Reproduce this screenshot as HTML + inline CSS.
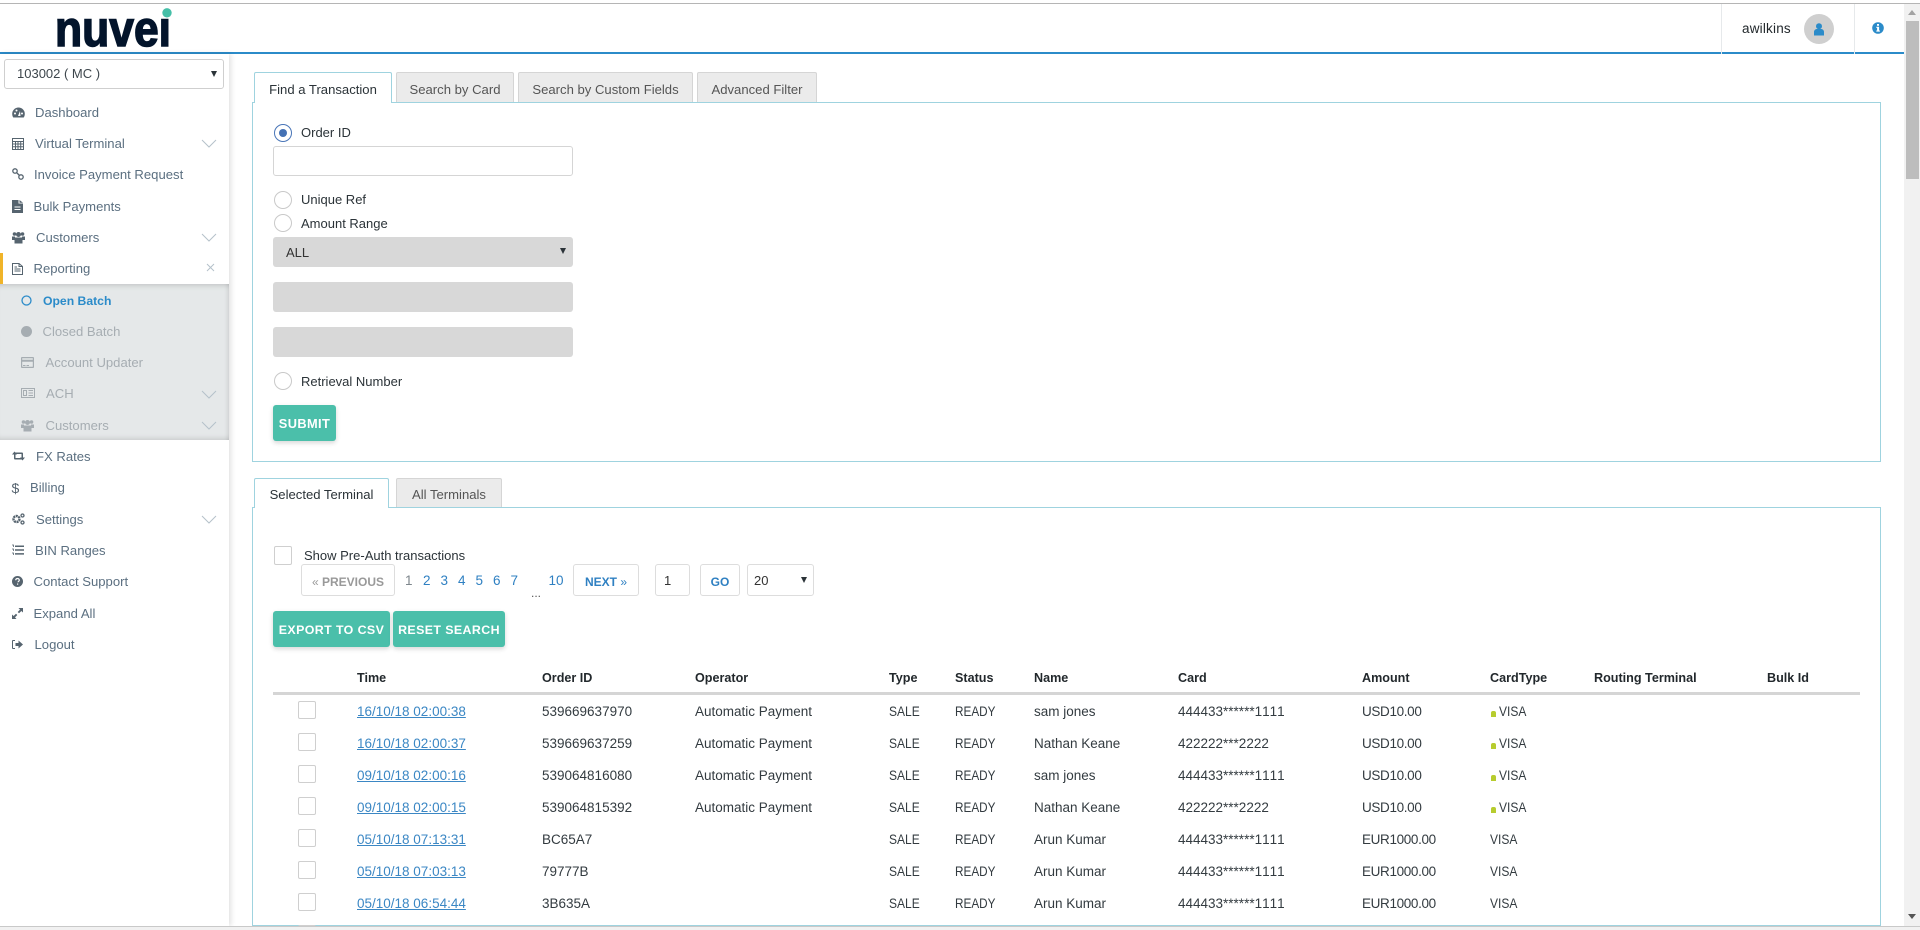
<!DOCTYPE html>
<html><head><meta charset="utf-8"><title>Nuvei</title>
<style>
*{box-sizing:border-box}
html,body{margin:0;padding:0;width:1920px;height:930px;overflow:hidden;background:#fff;font-family:"Liberation Sans",sans-serif;font-size:13.5px;color:#2b3338}
.a{position:absolute}
.t{position:absolute;line-height:20px;height:20px;white-space:nowrap}
.side{position:absolute;left:0;top:54px;width:229px;height:872px;background:#fff;box-shadow:2px 0 5px rgba(0,0,0,.12)}
.n{position:absolute;line-height:20px;height:20px;white-space:nowrap;font-size:13.1px;color:#5b6f80}
.s{color:#a6adb2}
.ic{position:absolute;fill:#56646f}
.ig{position:absolute;fill:#a6adb2}
.ch{position:absolute;left:201px;width:16px;height:9px;fill:none;stroke:#b5c1ca;stroke-width:1}
.tab{position:absolute;top:72px;height:31px;background:#ebebeb;border:1px solid #d5d5d5;border-bottom:0;text-align:center;line-height:33px;color:#555;font-size:13.1px;border-radius:2px 2px 0 0}
.tab.on{background:#fff;border-color:#9fd3df;color:#2b3338;height:31px;z-index:2}
.panel{position:absolute;left:252px;width:1629px;border:1px solid #9fd3df;background:#fff}
.rad{position:absolute;left:274px;width:18px;height:18px;border:1px solid #c9c9c9;border-radius:50%;background:#fff}
.box{position:absolute;left:273px;width:300px;height:30px;border-radius:3px;background:#d8d8d8}
.btn{position:absolute;height:36px;background:#4bbfaa;border-radius:3px;color:#fff;font-weight:700;font-size:12.4px;line-height:38px;letter-spacing:.4px;box-shadow:0 2px 5px rgba(0,0,0,.16);white-space:nowrap}
.pg{position:absolute;top:564px;height:32px;border:1px solid #ddd;border-radius:3px;background:#fff;text-align:center;line-height:31px;font-size:13px;white-space:nowrap}
.pb{line-height:34px}
.num{position:absolute;top:571px;line-height:20px;color:#2f80c2;font-size:13.5px}
table{position:absolute;left:273px;top:664px;border-collapse:separate;border-spacing:0;table-layout:fixed;width:1587px;font-size:13.5px}
th{height:31px;padding:0;text-align:left;font-weight:700;font-size:12.6px;color:#22282c;border-bottom:3px solid #d5d5d5}
td{height:32px;padding:1px 0 0;white-space:nowrap;color:#333b40;font-kerning:none}
td a{color:#3b87c4;text-decoration:underline}
.cb{display:block;position:relative;top:-2px;width:18px;height:18px;margin:0 0 0 25px;border:1px solid #cfcfcf;border-radius:2px;background:#fff}
.lk{display:inline-block;width:5px;height:6px;margin:0 3px 0 1px;background:#b7cc2e;border-radius:2px 2px 0 0;vertical-align:-1px}
.x{display:inline-block;transform:scaleX(.89);transform-origin:0 50%}
.y{display:inline-block;transform:scaleX(.87);transform-origin:0 50%}
.c3{letter-spacing:-.35px}
</style></head><body>

<!-- top bar -->
<div class="a" style="left:0;top:3px;width:1920px;height:1px;background:#b5b5b5"></div>
<div class="a" style="left:0;top:52px;width:1904px;height:2px;background:#2b8bc9"></div>
<div class="a" style="left:1721px;top:4px;width:1px;height:50px;background:#e6e9eb"></div>
<div class="a" style="left:1854px;top:4px;width:1px;height:50px;background:#e6e9eb"></div>
<svg class="a" style="left:0;top:0" width="200" height="52">
<text x="55" y="46" font-family="Liberation Sans" font-weight="700" font-size="50" textLength="116" lengthAdjust="spacingAndGlyphs" fill="#03142b" stroke="#03142b" stroke-width="1.500">nuvei</text>
<rect x="150" y="4" width="30" height="14.500" fill="#fff"/>
<circle cx="167" cy="12.800" r="4.700" fill="#45bfa8"/>
</svg>
<div class="t" style="left:1742px;top:19px;color:#22282c;font-size:13.5px;letter-spacing:.2px">awilkins</div>
<div class="a" style="left:1804px;top:14px;width:30px;height:30px;border-radius:50%;background:#cfcfcf"></div>
<svg class="a" style="left:1813px;top:23px" width="12" height="13" viewBox="0 0 12 13"><circle cx="6" cy="3.200" r="3" fill="#2b8bc9"/><path d="M1 12.500V9c0-2 1.600-3 3-3h4c1.400 0 3 1 3 3v3.500z" fill="#2b8bc9"/></svg>
<svg class="a" style="left:1872px;top:22px" width="12" height="12" viewBox="0 0 12 12"><circle cx="6" cy="6" r="5.800" fill="#2b8bc9"/><rect x="5" y="2" width="2" height="1.800" fill="#fff"/><path d="M4.300 4.800h2.800v3.700h.8v1.100H4.300V8.500h.8V5.900h-.8z" fill="#fff"/></svg>

<!-- scrollbar -->
<div class="a" style="left:1904px;top:4px;width:16px;height:922px;background:#f1f1f1"></div>
<div class="a" style="left:1906px;top:21px;width:13px;height:158px;background:#bdbdbd"></div>
<svg class="a" style="left:1907px;top:10px" width="10" height="6"><path d="M5 0l4 5H1z" fill="#a3a3a3"/></svg>
<svg class="a" style="left:1907px;top:914px" width="10" height="6"><path d="M1 0h8L5 5z" fill="#555"/></svg>

<!-- sidebar -->
<div class="side"></div>
<div class="a" style="left:4px;top:59px;width:220px;height:30px;border:1px solid #cfcfcf;border-radius:3px;background:#fff"></div>
<div class="t" style="left:17px;top:64px;font-size:13px;color:#3d464c">103002 ( MC )</div>
<svg class="a" style="left:210px;top:71px" width="8" height="7"><path d="M1 0h6L4 6z" fill="#2b3338"/></svg>

<div class="a" style="left:0;top:253px;width:3px;height:31px;background:#f0b429"></div>
<div class="a" style="left:0;top:284px;width:229px;height:156px;background:#e5e8e9;box-shadow:inset 0 6px 6px -5px rgba(0,0,0,.18),inset 0 -6px 6px -5px rgba(0,0,0,.15),inset -5px 0 5px -4px rgba(0,0,0,.12)"></div>

<svg class="ic" style="left:12px;top:107px" width="13" height="11" viewBox="0 0 13 11"><path d="M6.500.500A6.300 6.300 0 0 0 .2 6.800c0 1.500.4 2.800 1.100 3.700h10.400c.7-.9 1.100-2.200 1.100-3.700A6.300 6.300 0 0 0 6.500.500z"/><circle cx="3" cy="6.500" r="1" fill="#fff"/><circle cx="4.500" cy="3.500" r="1" fill="#fff"/><circle cx="10" cy="6.500" r="1" fill="#fff"/><path d="M6 9l2-5 .5 5z" fill="#fff"/></svg>
<div class="n" style="left:35px;top:103px">Dashboard</div>

<svg class="a" style="left:12px;top:138px" width="12" height="12" viewBox="0 0 12 12" fill="none" stroke="#56646f"><rect x=".5" y=".5" width="11" height="11"/><path d="M.5 3.500h11M.5 6h11M.5 8.700h11M3.500 3.500v8M6 3.500v8M8.700 3.500v8"/></svg>
<div class="n" style="left:35px;top:134px">Virtual Terminal</div>
<svg class="ch" style="top:139px" viewBox="0 0 16 9"><path d="M1 1l7 7 7-7"/></svg>

<svg class="a" style="left:12px;top:168px" width="12" height="12" viewBox="0 0 12 12" fill="none" stroke="#56646f" stroke-width="1.300"><circle cx="3" cy="3" r="2.200"/><circle cx="9" cy="9" r="2.200"/><path d="M4.500 4.500l3 3"/></svg>
<div class="n" style="left:34px;top:165px">Invoice Payment Request</div>

<svg class="ic" style="left:12px;top:200px" width="11" height="13" viewBox="0 0 11 13"><path d="M0 0h6.500v3.500H11V13H0z"/><path d="M7.500 0L11 2.700H7.500z"/><path d="M2.500 6.500h6v1h-6zM2.500 9h6v1h-6z" fill="#fff"/></svg>
<div class="n" style="left:33.500px;top:197px">Bulk Payments</div>

<svg class="ic" style="left:12px;top:231px" width="13" height="13" viewBox="0 0 13 12"><circle cx="2.500" cy="2.500" r="1.800"/><circle cx="10.500" cy="2.500" r="1.800"/><circle cx="6.500" cy="3" r="2.500"/><path d="M0 5h3v3.500H0zM10 5h3v3.500h-3zM2.500 6h8v6h-8z"/></svg>
<div class="n" style="left:36px;top:228px">Customers</div>
<svg class="ch" style="top:233px" viewBox="0 0 16 9"><path d="M1 1l7 7 7-7"/></svg>

<svg class="a" style="left:12px;top:263px" width="11" height="12" viewBox="0 0 11 12" fill="none" stroke="#56646f"><path d="M.5.500h6.500l3.500 3V11.500H.5zM7 .500v3h3.500M2.500 6h6M2.500 8h6M2.500 4h2.500"/></svg>
<div class="n" style="left:33.500px;top:259px">Reporting</div>
<svg class="a" style="left:206px;top:263px" width="9" height="9" fill="none" stroke="#b5c1ca"><path d="M1 1l7 7M8 1l-7 7"/></svg>

<svg class="a" style="left:21px;top:295px" width="11" height="11" fill="none" stroke="#2b8bc9" stroke-width="1.300"><circle cx="5.500" cy="5.500" r="4.500"/></svg>
<div class="n" style="left:43px;top:291px;color:#2b8bc9;font-weight:700;font-size:12.2px">Open Batch</div>

<div class="a" style="left:21px;top:326px;width:11px;height:11px;border-radius:50%;background:#a6adb2"></div>
<div class="n s" style="left:42.500px;top:322px">Closed Batch</div>

<svg class="ig" style="left:21px;top:357px" width="13" height="11" viewBox="0 0 13 11"><path d="M1 0h11a1 1 0 0 1 1 1v9a1 1 0 0 1-1 1H1a1 1 0 0 1-1-1V1a1 1 0 0 1 1-1zm.200 1.200v1.600h10.600V1.200zm0 3.600v5h10.600v-5z" fill-rule="evenodd"/><path d="M2 8h2.500v1H2zM5.500 8H8v1H5.500z"/></svg>
<div class="n s" style="left:45.500px;top:353px">Account Updater</div>

<svg class="a" style="left:21px;top:388px" width="14" height="10" viewBox="0 0 14 10" fill="none" stroke="#a6adb2"><rect x=".5" y=".5" width="13" height="9"/><rect x="2.500" y="2.500" width="3" height="5"/><path d="M7.500 2.500h4.500M7.500 5h4.500M7.500 7.500h4.500"/></svg>
<div class="n s" style="left:46px;top:384px">ACH</div>
<svg class="ch" style="top:390px" viewBox="0 0 16 9"><path d="M1 1l7 7 7-7"/></svg>

<svg class="ig" style="left:21px;top:419px" width="13" height="13" viewBox="0 0 13 12"><circle cx="2.500" cy="2.500" r="1.800"/><circle cx="10.500" cy="2.500" r="1.800"/><circle cx="6.500" cy="3" r="2.500"/><path d="M0 5h3v3.500H0zM10 5h3v3.500h-3zM2.500 6h8v6h-8z"/></svg>
<div class="n s" style="left:45.500px;top:416px">Customers</div>
<svg class="ch" style="top:421px" viewBox="0 0 16 9"><path d="M1 1l7 7 7-7"/></svg>

<svg class="ic" style="left:12px;top:451px" width="13" height="10" viewBox="0 0 13 9"><path d="M2 3H0l2.500-3L5 3H3.500v3.500H9L10.500 8H3a1 1 0 0 1-1-1zM11 6h2l-2.500 3L8 6h1.500V2.500H4L2.500 1H10a1 1 0 0 1 1 1z"/></svg>
<div class="n" style="left:36px;top:447px">FX Rates</div>

<div class="t" style="left:11.500px;top:478px;font-size:14px;font-weight:400;color:#56646f">$</div>
<div class="n" style="left:30px;top:478px">Billing</div>

<svg class="ic" style="left:12px;top:513px" width="13" height="12" viewBox="0 0 13 12"><circle cx="4.500" cy="6" r="3" fill="none" stroke="#56646f" stroke-width="2.400" stroke-dasharray="2 .600"/><circle cx="10.500" cy="2.500" r="1.500" fill="none" stroke="#56646f" stroke-width="1.300"/><circle cx="10.500" cy="9.500" r="1.500" fill="none" stroke="#56646f" stroke-width="1.300"/></svg>
<div class="n" style="left:36px;top:510px">Settings</div>
<svg class="ch" style="top:515px" viewBox="0 0 16 9"><path d="M1 1l7 7 7-7"/></svg>

<svg class="a" style="left:12px;top:544px" width="12" height="12" viewBox="0 0 12 11"><path d="M3 1h9v1.500H3zM3 4.800h9v1.500H3zM3 8.600h9v1.500H3z" fill="#56646f"/><path d="M0 .500h1.500v2M0 4.500h1.500v2M0 8.500h1.500v2" stroke="#56646f" fill="none" stroke-width=".8"/></svg>
<div class="n" style="left:35px;top:541px">BIN Ranges</div>

<svg class="a" style="left:12px;top:576px" width="11" height="11" viewBox="0 0 11 11"><circle cx="5.500" cy="5.500" r="5.500" fill="#56646f"/><path d="M3.700 4.200c0-1 .8-1.700 1.800-1.700s1.800.7 1.800 1.600c0 1.200-1.300 1.200-1.300 2.200" fill="none" stroke="#fff" stroke-width="1.200"/><rect x="5" y="7.500" width="1.200" height="1.200" fill="#fff"/></svg>
<div class="n" style="left:33.500px;top:572px">Contact Support</div>

<svg class="a" style="left:12px;top:608px" width="11" height="11" viewBox="0 0 11 11"><path d="M6.500 0H11v4.500L9.400 3 7 5.300 5.700 4 8 1.600zM4.500 11H0V6.500L1.600 8 4 5.700 5.300 7 3 9.400z" fill="#56646f"/></svg>
<div class="n" style="left:33.500px;top:604px">Expand All</div>

<svg class="a" style="left:12px;top:640px" width="11" height="9" viewBox="0 0 11 9"><path d="M3 .500H1a.5.500 0 0 0-.5.500v7a.5.500 0 0 0 .5.500h2" fill="none" stroke="#56646f"/><path d="M3.500 3h3V.500L11 4.500 6.500 8.500V6h-3z" fill="#56646f"/></svg>
<div class="n" style="left:34.500px;top:635px">Logout</div>

<!-- top panel -->
<div class="panel" style="top:102px;height:360px"></div>
<div class="tab on" style="left:254px;width:138px">Find a Transaction</div>
<div class="tab" style="left:396px;width:118px;height:30px">Search by Card</div>
<div class="tab" style="left:518px;width:175px;height:30px">Search by Custom Fields</div>
<div class="tab" style="left:697px;width:120px;height:30px">Advanced Filter</div>

<div class="rad" style="top:124px;border-color:#4a76b8"></div>
<div class="a" style="left:279px;top:129px;width:8px;height:8px;border-radius:50%;background:#4471b4"></div>
<div class="t" style="left:301px;top:122.500px;font-size:13px">Order ID</div>
<div class="a" style="left:273px;top:146px;width:300px;height:30px;border:1px solid #d5d5d5;border-radius:3px;background:#fff"></div>
<div class="rad" style="top:191px"></div>
<div class="t" style="left:301px;top:190px;font-size:13px">Unique Ref</div>
<div class="rad" style="top:214px"></div>
<div class="t" style="left:301px;top:214px;font-size:13px">Amount Range</div>
<div class="box" style="top:237px"></div>
<div class="t" style="left:286px;top:243px;font-size:13px;color:#333">ALL</div>
<svg class="a" style="left:559px;top:248px" width="8" height="7"><path d="M1 0h6L4 6z" fill="#2b3338"/></svg>
<div class="box" style="top:282px"></div>
<div class="box" style="top:327px"></div>
<div class="rad" style="top:372px"></div>
<div class="t" style="left:301px;top:372px;font-size:13px">Retrieval Number</div>
<div class="btn" style="left:273px;top:405px;width:63px;text-align:center;font-size:12.8px">SUBMIT</div>

<!-- bottom panel -->
<div class="panel" style="top:507px;height:419px"></div>
<div class="tab on" style="left:254px;top:478px;width:135px;height:30px;line-height:31px">Selected Terminal</div>
<div class="tab" style="left:396px;top:478px;width:106px;height:29px;line-height:31px">All Terminals</div>

<div class="a" style="left:274px;top:546px;width:18px;height:19px;border:1px solid #cfcfcf;border-radius:2px"></div>
<div class="t" style="left:304px;top:546px;font-size:13px">Show Pre-Auth transactions</div>

<div class="pg pb" style="left:301px;width:94px;color:#999;font-weight:700;font-size:12px"><span style="font-weight:400">«</span> PREVIOUS</div>
<div class="num" style="left:405px;color:#7d868c">1</div>
<div class="num" style="left:423px">2</div>
<div class="num" style="left:440.500px">3</div>
<div class="num" style="left:458px">4</div>
<div class="num" style="left:475.500px">5</div>
<div class="num" style="left:493px">6</div>
<div class="num" style="left:510.500px">7</div>
<div class="t" style="left:531px;top:583px;font-size:12px;color:#555">...</div>
<div class="num" style="left:548.500px">10</div>
<div class="pg pb" style="left:573px;width:66px;color:#2f80c2;font-weight:700;font-size:12px">NEXT <span style="font-weight:400">»</span></div>
<div class="pg" style="left:655px;width:35px;text-align:left;padding-left:8px;color:#333">1</div>
<div class="pg pb" style="left:700px;width:40px;color:#2f80c2;font-weight:700;font-size:12px">GO</div>
<div class="pg" style="left:747px;width:67px;text-align:left;padding-left:6px;color:#333">20</div>
<svg class="a" style="left:800px;top:577px" width="8" height="7"><path d="M1 0h6L4 6z" fill="#2b3338"/></svg>

<div class="btn" style="left:273px;top:611px;width:117px;text-align:center">EXPORT TO CSV</div>
<div class="btn" style="left:393px;top:611px;width:112px;text-align:center">RESET SEARCH</div>

<table>
<colgroup><col style="width:84px"><col style="width:185px"><col style="width:153px"><col style="width:194px"><col style="width:66px"><col style="width:79px"><col style="width:144px"><col style="width:184px"><col style="width:128px"><col style="width:104px"><col style="width:173px"><col style="width:93px"></colgroup>
<thead><tr><th></th><th>Time</th><th>Order ID</th><th>Operator</th><th>Type</th><th>Status</th><th>Name</th><th>Card</th><th>Amount</th><th>CardType</th><th>Routing Terminal</th><th>Bulk Id</th></tr></thead>
<tbody>
<tr><td><span class="cb"></span></td><td><a>16/10/18 02:00:38</a></td><td>539669637970</td><td>Automatic Payment</td><td><span class="x">SALE</span></td><td><span class="y">READY</span></td><td>sam jones</td><td>444433******1111</td><td class="c3">USD10.00</td><td><span class="lk"></span><span class="x">VISA</span></td><td></td><td></td></tr>
<tr><td><span class="cb"></span></td><td><a>16/10/18 02:00:37</a></td><td>539669637259</td><td>Automatic Payment</td><td><span class="x">SALE</span></td><td><span class="y">READY</span></td><td>Nathan Keane</td><td>422222***2222</td><td class="c3">USD10.00</td><td><span class="lk"></span><span class="x">VISA</span></td><td></td><td></td></tr>
<tr><td><span class="cb"></span></td><td><a>09/10/18 02:00:16</a></td><td>539064816080</td><td>Automatic Payment</td><td><span class="x">SALE</span></td><td><span class="y">READY</span></td><td>sam jones</td><td>444433******1111</td><td class="c3">USD10.00</td><td><span class="lk"></span><span class="x">VISA</span></td><td></td><td></td></tr>
<tr><td><span class="cb"></span></td><td><a>09/10/18 02:00:15</a></td><td>539064815392</td><td>Automatic Payment</td><td><span class="x">SALE</span></td><td><span class="y">READY</span></td><td>Nathan Keane</td><td>422222***2222</td><td class="c3">USD10.00</td><td><span class="lk"></span><span class="x">VISA</span></td><td></td><td></td></tr>
<tr><td><span class="cb"></span></td><td><a>05/10/18 07:13:31</a></td><td>BC65A7</td><td></td><td><span class="x">SALE</span></td><td><span class="y">READY</span></td><td>Arun Kumar</td><td>444433******1111</td><td class="c3">EUR1000.00</td><td><span class="x">VISA</span></td><td></td><td></td></tr>
<tr><td><span class="cb"></span></td><td><a>05/10/18 07:03:13</a></td><td>79777B</td><td></td><td><span class="x">SALE</span></td><td><span class="y">READY</span></td><td>Arun Kumar</td><td>444433******1111</td><td class="c3">EUR1000.00</td><td><span class="x">VISA</span></td><td></td><td></td></tr>
<tr><td><span class="cb"></span></td><td><a>05/10/18 06:54:44</a></td><td>3B635A</td><td></td><td><span class="x">SALE</span></td><td><span class="y">READY</span></td><td>Arun Kumar</td><td>444433******1111</td><td class="c3">EUR1000.00</td><td><span class="x">VISA</span></td><td></td><td></td></tr>
</tbody></table>
<div class="a" style="left:298px;top:925px;width:18px;height:5px;border:1px solid #cfcfcf;border-radius:2px"></div>

<!-- bottom scrollbar -->
<div class="a" style="left:0;top:926px;width:1920px;height:4px;background:#f1f1f1;border-top:1px solid #c9c9c9"></div>
</body></html>
